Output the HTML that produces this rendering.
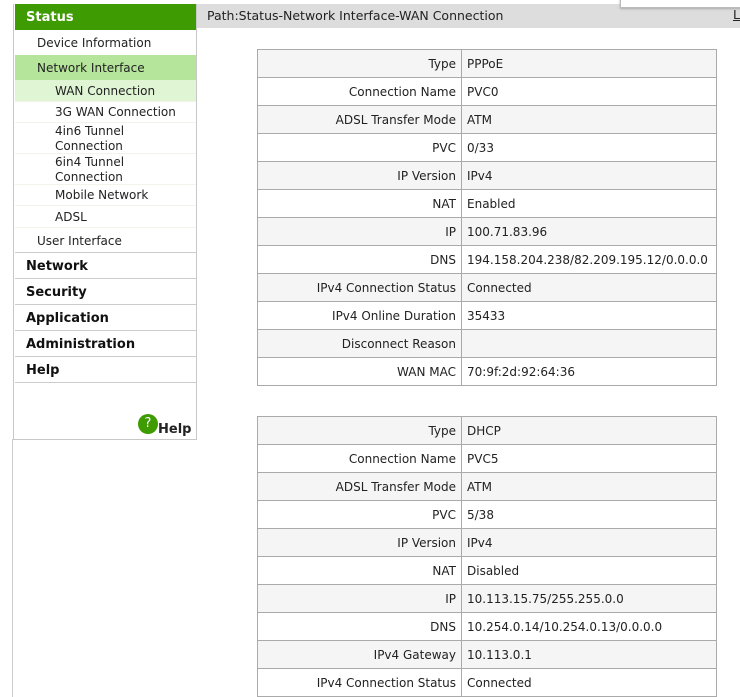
<!DOCTYPE html><html><head><style>
body{margin:0;width:740px;height:697px;overflow:hidden;background:#fff;font-family:"DejaVu Sans",Verdana,sans-serif;font-size:12px;color:#222;position:relative}
.a{position:absolute}
#side{left:13px;top:4px;width:182px;height:435px;border:1px solid #c8c8c8;border-top:none;background:#fff}
#side div{position:absolute;left:1px;width:181px;box-sizing:border-box}
.h{font-weight:bold;font-size:13px;padding-left:11px;padding-top:2px;border-bottom:1px solid #ccc;line-height:24px;height:26px;color:#111}
.s{padding-left:22px;line-height:26px;font-size:12px}
.ss{padding-left:40px;font-size:12px;line-height:15px;border-bottom:1px solid #f3f3ea}
table{position:absolute;left:257px;width:460px;border-collapse:collapse}
td{border:1px solid #aaa;height:27px;padding:0 5px;font-size:12px;white-space:nowrap;overflow:hidden}
td:first-child{text-align:right;width:193px}
tr:nth-child(odd){background:#f5f5f5}
</style></head><body>
<div class="a" style="left:197px;top:4px;width:543px;height:24px;background:#ddd;line-height:24px;padding-left:10px;font-size:12.5px">Path:Status-Network Interface-WAN Connection</div>
<div class="a" style="left:733px;top:7px;font-size:12.5px;text-decoration:underline">L</div>
<div class="a" style="left:620px;top:-2px;width:125px;height:8px;background:#fff;border:1px solid #bbb;box-shadow:0 1px 2px #aaa"></div>
<div id="side" class="a">
<div style="top:0;height:26px;background:#3e9b02;color:#fff;font-weight:bold;font-size:13px;padding-left:11px;line-height:27px">Status</div>
<div class="s" style="top:26px;height:25px">Device Information</div>
<div class="s" style="top:51px;height:25px;background:#b5e59a">Network Interface</div>
<div class="ss" style="top:76px;height:22px;line-height:22px;background:#e0f5d4">WAN Connection</div>
<div class="ss" style="top:98px;height:21px;line-height:21px">3G WAN Connection</div>
<div class="ss" style="top:119px;height:31px;padding-top:1px">4in6 Tunnel<br>Connection</div>
<div class="ss" style="top:150px;height:31px;padding-top:1px">6in4 Tunnel<br>Connection</div>
<div class="ss" style="top:181px;height:21px;line-height:21px">Mobile Network</div>
<div class="ss" style="top:202px;height:22px;line-height:22px">ADSL</div>
<div class="s" style="top:224px;height:25px;border-bottom:1px solid #ccc;line-height:27px">User Interface</div>
<div class="h" style="top:249px">Network</div>
<div class="h" style="top:275px">Security</div>
<div class="h" style="top:301px">Application</div>
<div class="h" style="top:327px">Administration</div>
<div class="h" style="top:353px">Help</div>
<div style="top:410px;left:124px;width:60px;font-weight:bold;font-size:13px;line-height:20px"><span style="display:inline-block;width:20px;height:20px;border-radius:50%;background:#3e9b02;color:#fff;text-align:center;line-height:20px;font-weight:normal;vertical-align:top">?</span><span style="position:relative;top:6px">Help</span></div>
</div>
<div class="a" style="left:12px;top:439px;width:1px;height:258px;background:#ccc"></div>
<table style="top:49px">
<tr><td>Type</td><td>PPPoE</td></tr>
<tr><td>Connection Name</td><td>PVC0</td></tr>
<tr><td>ADSL Transfer Mode</td><td>ATM</td></tr>
<tr><td>PVC</td><td>0/33</td></tr>
<tr><td>IP Version</td><td>IPv4</td></tr>
<tr><td>NAT</td><td>Enabled</td></tr>
<tr><td>IP</td><td>100.71.83.96</td></tr>
<tr><td>DNS</td><td>194.158.204.238/82.209.195.12/0.0.0.0</td></tr>
<tr><td>IPv4 Connection Status</td><td>Connected</td></tr>
<tr><td>IPv4 Online Duration</td><td>35433</td></tr>
<tr><td>Disconnect Reason</td><td></td></tr>
<tr><td>WAN MAC</td><td>70:9f:2d:92:64:36</td></tr>
</table>
<table style="top:416px">
<tr><td>Type</td><td>DHCP</td></tr>
<tr><td>Connection Name</td><td>PVC5</td></tr>
<tr><td>ADSL Transfer Mode</td><td>ATM</td></tr>
<tr><td>PVC</td><td>5/38</td></tr>
<tr><td>IP Version</td><td>IPv4</td></tr>
<tr><td>NAT</td><td>Disabled</td></tr>
<tr><td>IP</td><td>10.113.15.75/255.255.0.0</td></tr>
<tr><td>DNS</td><td>10.254.0.14/10.254.0.13/0.0.0.0</td></tr>
<tr><td>IPv4 Gateway</td><td>10.113.0.1</td></tr>
<tr><td>IPv4 Connection Status</td><td>Connected</td></tr>
</table>
</body></html>
